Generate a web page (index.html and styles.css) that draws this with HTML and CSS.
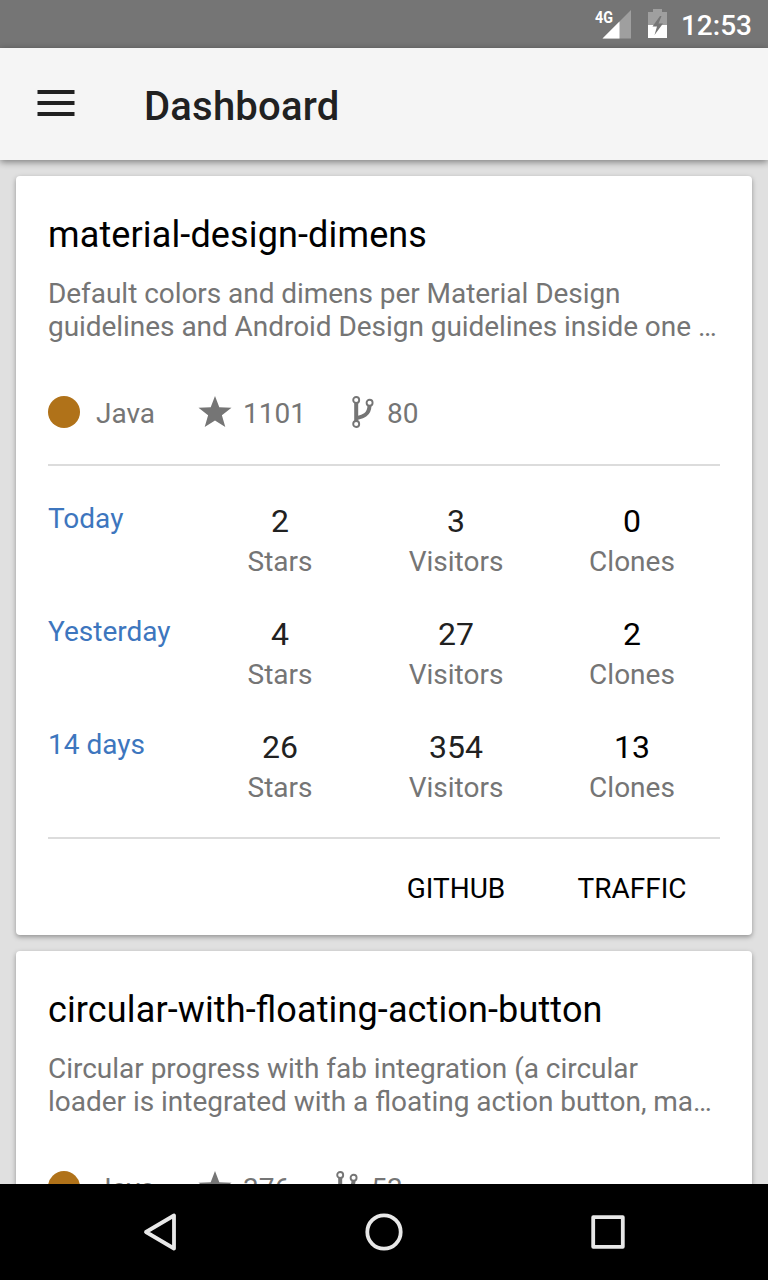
FILE: index.html
```html
<!DOCTYPE html>
<html lang="en">
<head>
<meta charset="utf-8">
<title>Dashboard</title>
<link rel="stylesheet" href="styles.css">
</head>
<body>
<svg class="defs" aria-hidden="true">
  <symbol id="star" viewBox="0 0 34 32"><path d="M17 0l4.300 11.200L33.500 11.700l-9.600 7.500L27.300 31 17 24.400 6.700 31l3.400-11.800L.5 11.700l12.200-.5z" fill="currentColor"/></symbol>
  <symbol id="fork" viewBox="0 0 22 32"><g fill="none" stroke="currentColor"><g stroke-width="1.900"><circle cx="4.200" cy="4" r="3"/><circle cx="17.600" cy="6.700" r="3"/><circle cx="4.200" cy="28" r="3"/></g><path d="M4.200 7v18M4.200 22.300c6-1.600 13-3 13.300-12.600" stroke-width="4"/></g></symbol>
</svg>
<div class="screen">
  <div class="status">
    <svg class="signal" width="38" height="34" viewBox="0 0 38 34"><path d="M37 5v28.500H8.500z" fill="#9f9f9f"/><path d="M25.500 16.500v17H8.500z" fill="#fff"/><text x="1" y="18" textLength="18" lengthAdjust="spacingAndGlyphs" class="net">4G</text></svg>
    <svg class="battery" width="19" height="29" viewBox="0 0 19 29"><path d="M0 3h5V0h9v3h5v13H0z" fill="#9f9f9f"/><path d="M0 16h19v13H0z" fill="#fff"/><path d="M12 7L4.500 17.500H9L6.500 26l8.500-11.500H10.500L13.500 7z" fill="#757575"/></svg>
    <span class="clock">12:53</span>
  </div>
  <header class="appbar">
    <svg class="menu" width="38" height="26" viewBox="0 0 38 26"><path d="M.5 2h37M.5 13h37M.5 24h37" stroke="#212121" stroke-width="4"/></svg>
    <h1 class="heading">Dashboard</h1>
  </header>
  <main class="content">
    <article class="card">
      <h2 class="name">material-design-dimens</h2>
      <p class="desc">Default colors and dimens per Material Design<br>guidelines and Android Design guidelines inside one …</p>
      <div class="meta"><span class="dot"></span><span class="lang">Java</span><svg class="star"><use href="#star"/></svg><span class="count">1101</span><svg class="fork"><use href="#fork"/></svg><span>80</span></div>
      <div class="stats">
        <div class="period">Today</div><div class="stat"><b>2</b>Stars</div><div class="stat"><b>3</b>Visitors</div><div class="stat clones"><b>0</b>Clones</div>
        <div class="period">Yesterday</div><div class="stat"><b>4</b>Stars</div><div class="stat"><b>27</b>Visitors</div><div class="stat clones"><b>2</b>Clones</div>
        <div class="period">14 days</div><div class="stat"><b>26</b>Stars</div><div class="stat"><b>354</b>Visitors</div><div class="stat clones"><b>13</b>Clones</div>
      </div>
      <div class="actions"><a>GITHUB</a><a>TRAFFIC</a></div>
    </article>
    <article class="card">
      <h2 class="name">circular-with-<span class="lig">fl</span>oating-action-button</h2>
      <p class="desc wide">Circular progress with fab integration (a circular<br>loader is integrated with a <span class="lig">fl</span>oating action button, ma…</p>
      <div class="meta"><span class="dot"></span><span class="lang">Java</span><svg class="star"><use href="#star"/></svg><span class="count">376</span><svg class="fork"><use href="#fork"/></svg><span>53</span></div>
    </article>
  </main>
  <nav class="nav">
    <svg width="40" height="40" viewBox="0 0 40 40"><path d="M34 3.500v33L6 20z"/></svg>
    <svg width="40" height="40" viewBox="0 0 40 40"><circle cx="20" cy="20" r="16.700"/></svg>
    <svg width="40" height="40" viewBox="0 0 40 40"><path d="M5.200 5.200h29.600v29.600H5.200z"/></svg>
  </nav>
</div>
</body>
</html>
```
FILE: styles.css
```css
* { box-sizing: border-box; }
body { margin: 0; font-family: Roboto, sans-serif; }
.defs { position: absolute; width: 0; height: 0; }
.screen { width: 768px; height: 1280px; display: flex; flex-direction: column; overflow: hidden; background: #e0e0e0; }
.status { height: 48px; flex: none; background: #757575; display: flex; justify-content: flex-end; align-items: flex-start; padding-right: 16px; }
.signal { margin: 5px 16px 0 0; }
.net { font: 700 17px Roboto, sans-serif; fill: #fff; }
.battery { margin: 9px 14px 0 0; }
.clock { color: #fff; font-size: 28px; font-weight: 500; line-height: 52px; }
.appbar { height: 112px; flex: none; background: #f5f5f5; display: flex; align-items: flex-start; padding-left: 37px; box-shadow: 0 2px 7px rgba(0,0,0,.45); z-index: 1; }
.menu { margin-top: 42px; }
.heading { margin: 0 0 0 69px; font-size: 40px; font-weight: 500; line-height: 118px; letter-spacing: .22px; color: #212121; }
.content { flex: 1; min-height: 0; overflow: hidden; padding: 16px; display: flex; flex-direction: column; gap: 16px; }
.card { height: 759px; flex: none; background: #fff; border-radius: 4px; padding: 38px 32px 0; box-shadow: 0 2px 5px rgba(0,0,0,.35); color: #757575; font-size: 28px; line-height: 33px; }
.name { margin: 0 0 21px; font-size: 36px; font-weight: 400; line-height: 42px; letter-spacing: .13px; color: #000; }
.desc { margin: 0 0 53px; white-space: nowrap; letter-spacing: -.05px; }
.desc.wide { letter-spacing: -.02px; }
.lig { letter-spacing: 0; font-variant-ligatures: common-ligatures; }
.meta { height: 68px; display: flex; align-items: flex-start; line-height: 35px; }
.dot { width: 32px; height: 32px; border-radius: 50%; background: #b07219; margin-right: 16px; }
.lang { width: 102px; }
.star { width: 34px; height: 32px; margin-right: 11px; }
.count { margin-right: 46px; }
.fork { width: 22px; height: 32px; margin-right: 13px; }
.stats { height: 375px; border-top: 2px solid #dcdcdc; border-bottom: 2px solid #dcdcdc; padding-top: 36px; display: grid; grid-template-columns: 144px 176px 176px 176px; grid-template-rows: repeat(3, 113px); }
.period { color: #3d76be; }
.stat { text-align: center; }
.stat b { display: block; font-size: 32px; font-weight: 400; line-height: 38px; margin-bottom: 5px; color: #212121; }
.clones b { color: #000; }
.actions { display: flex; justify-content: flex-end; padding-top: 33px; color: #000; }
.actions a { width: 176px; text-align: center; }
.nav { height: 96px; flex: none; background: #000; display: flex; justify-content: center; align-items: center; gap: 184px; }
.nav svg { fill: none; stroke: #e8e8e8; stroke-width: 3.8; stroke-linejoin: round; }
```
